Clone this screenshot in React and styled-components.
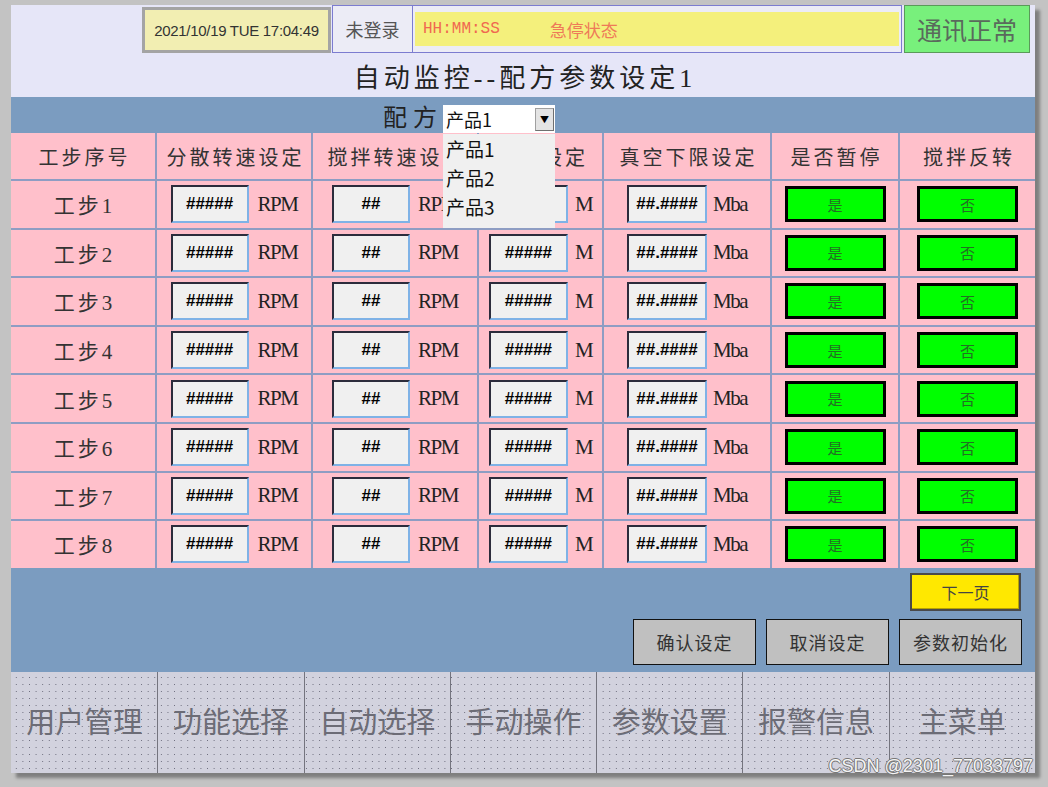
import React from 'react';
import styled, { createGlobalStyle } from 'styled-components';

const GlobalStyle = createGlobalStyle`
  html, body { margin: 0; padding: 0; }
  body {
    background: #c3c3c3;
    width: 1048px;
    height: 787px;
    overflow: hidden;
    font-family: "Liberation Serif", "Noto Sans CJK SC", serif;
  }
`;

const Screen = styled.div`
  position: relative;
  width: 1024px;
  margin: 5px 0 0 11px;
  display: flex;
  flex-direction: column;
  box-shadow: 5px 5px 3px rgba(0, 0, 0, 0.35);
`;

const Header = styled.header`
  height: 92px;
  background: #e6e6f8;
  display: flex;
  flex-direction: column;
`;

const StatusRow = styled.div`
  height: 48px;
  display: flex;
  align-items: flex-start;
  padding-left: 131px;
`;

const DateBox = styled.div`
  box-sizing: border-box;
  width: 189px;
  height: 46px;
  margin-top: 2px;
  background: #f2eeb2;
  border: 3px solid #a4a4a4;
  display: flex;
  align-items: center;
  justify-content: center;
  font: 15px "Liberation Sans", sans-serif;
  letter-spacing: -0.3px;
  color: #333;
`;

const LoginBox = styled.div`
  box-sizing: border-box;
  width: 81px;
  height: 48px;
  margin-left: 1px;
  background: #ececf6;
  border: 1px solid #7c7cd0;
  display: flex;
  align-items: center;
  justify-content: center;
  font: 18px "Noto Sans CJK SC", sans-serif;
  color: #555;
`;

const AlarmBox = styled.div`
  box-sizing: border-box;
  width: 489px;
  height: 48px;
  padding: 6px 2px;
  background: #ececf6;
  border: 1px solid #7c7cd0;
  border-left: none;
`;

const AlarmInner = styled.div`
  height: 100%;
  background: #f4f07c;
  display: flex;
  align-items: center;
  padding-left: 8px;
  gap: 50px;
`;

const AlarmTime = styled.span`
  font: 16px "Liberation Mono", monospace;
  color: #f06850;
`;

const AlarmText = styled.span`
  font: 17px "Noto Sans CJK SC", sans-serif;
  color: #ee7a58;
`;

const CommBox = styled.div`
  box-sizing: border-box;
  width: 126px;
  height: 48px;
  margin-left: 2px;
  background: #78f07c;
  border: 1px solid #5a9a5a;
  display: flex;
  align-items: center;
  justify-content: center;
  font: 25px "Noto Sans CJK SC", sans-serif;
  color: #5a6a5c;
`;

const Title = styled.h1`
  margin: 0;
  height: 44px;
  display: flex;
  align-items: center;
  justify-content: center;
  padding-left: 4px;
  font-family: "Liberation Serif", "Noto Sans CJK SC", serif;
  font-weight: 400;
  font-size: 26px;
  letter-spacing: 4px;
  color: #222;
`;

const RecipeBand = styled.div`
  height: 36px;
  background: #7b9cc0;
  display: flex;
  align-items: center;
  padding-left: 372px;
`;

const RecipeLabel = styled.span`
  font: 24px "Noto Sans CJK SC", sans-serif;
  letter-spacing: 6px;
  color: #222;
`;

const Select = styled.div`
  position: relative;
  align-self: flex-end;
  box-sizing: border-box;
  width: 112px;
  height: 28px;
  background: #fff;
  display: flex;
  align-items: center;
  padding-left: 3px;
  font: 18px "Noto Sans CJK SC", sans-serif;
  color: #111;
`;

const SelectArrow = styled.span`
  position: absolute;
  right: 1px;
  top: 3px;
  bottom: 2px;
  width: 19px;
  box-sizing: border-box;
  background: #e4e4e4;
  border: 1px solid #a0a0a0;
  border-right-color: #707070;
  border-bottom-color: #707070;
  display: flex;
  align-items: center;
  justify-content: center;
  font-size: 9px;
  color: #000;
`;

const OptionList = styled.ul`
  position: absolute;
  z-index: 5;
  left: 0;
  top: 29px;
  width: 112px;
  height: 94px;
  box-sizing: border-box;
  margin: 0;
  padding: 1px 0 0 3px;
  list-style: none;
  background: #f0f0f0;
`;

const Option = styled.li`
  height: 29px;
  line-height: 29px;
  font: 19px "Noto Sans CJK SC", sans-serif;
  color: #111;
`;

const Table = styled.div`
  display: grid;
  grid-template-columns: 144px 154px 164px 123px 166px 126px 135px;
  grid-template-rows: 46px repeat(8, 46.6px);
  gap: 2px;
  background: #8e9dc3;
`;

const HeadCell = styled.div`
  background: #ffc0cb;
  display: flex;
  align-items: center;
  justify-content: center;
  padding-left: 3px;
  font: 20px "Noto Sans CJK SC", sans-serif;
  letter-spacing: 3px;
  color: #333;
`;

const StepCell = styled(HeadCell)`
  font-family: "Liberation Serif", "Noto Sans CJK SC", serif;
  font-size: 21px;
`;

const FieldCell = styled.div`
  background: #ffc0cb;
  display: flex;
  align-items: center;
  justify-content: center;
  gap: ${(p) => p.$gap || 8}px;
`;

const ValueBox = styled.div`
  box-sizing: border-box;
  width: ${(p) => p.$w}px;
  height: 38px;
  background: #f0f0f0;
  border-style: solid;
  border-width: 2px;
  border-color: #2c2c3c #7fb2e6 #7fb2e6 #2c2c3c;
  display: flex;
  align-items: center;
  justify-content: center;
  font: bold 17px "Liberation Sans", sans-serif;
  color: #000;
`;

const Unit = styled.span`
  font: 21px "Liberation Serif", serif;
  letter-spacing: -1.5px;
  color: #222;
`;

const ToggleButton = styled.div`
  box-sizing: border-box;
  width: 101px;
  height: 36px;
  background: #00ff00;
  border: 3px solid #000;
  display: flex;
  align-items: center;
  justify-content: center;
  font: 15px "Noto Sans CJK SC", sans-serif;
  color: #237023;
`;

const ActionArea = styled.div`
  height: 104px;
  background: #7b9cc0;
  display: flex;
  flex-direction: column;
  align-items: flex-end;
  padding: 5px 13px 0 0;
  box-sizing: border-box;
  gap: 8px;
`;

const NextButton = styled.div`
  box-sizing: border-box;
  width: 111px;
  height: 38px;
  margin-right: 1px;
  background: #ffe800;
  border: 2px solid #4a4a4a;
  box-shadow: inset -1px -1px 0 #b8a400;
  display: flex;
  align-items: center;
  justify-content: center;
  font: 16px "Noto Sans CJK SC", sans-serif;
  color: #444;
`;

const ButtonRow = styled.div`
  display: flex;
  gap: 10px;
`;

const GrayButton = styled.div`
  box-sizing: border-box;
  width: 123px;
  height: 46px;
  background: #c0c0c0;
  border: 1.5px solid #111;
  display: flex;
  align-items: center;
  justify-content: center;
  font: 18px "Noto Sans CJK SC", sans-serif;
  letter-spacing: 1px;
  color: #333;
`;

const NavBar = styled.nav`
  height: 101px;
  display: grid;
  grid-template-columns: repeat(7, 1fr);
  background-color: #d2d2de;
  background-image: radial-gradient(#6c6c7c 0.7px, transparent 0.9px);
  background-size: 6.6px 7px;
  background-position: 2px 2px;
`;

const NavItem = styled.div`
  display: flex;
  align-items: center;
  justify-content: center;
  padding-bottom: 4px;
  border-left: ${(p) => (p.$first ? 'none' : '1px solid #74747e')};
  font: 29px "Noto Sans CJK SC", sans-serif;
  color: #6c6c76;
`;

const Watermark = styled.span`
  position: absolute;
  right: 2px;
  bottom: -4px;
  font: 18px "Liberation Sans", sans-serif;
  color: #f4f4f4;
  text-shadow: -1px 0 #777, 1px 0 #777, 0 -1px #777, 0 1px #777;
`;

const headers = ['工步序号', '分散转速设定', '搅拌转速设定', '时间设定', '真空下限设定', '是否暂停', '搅拌反转'];
const steps = [1, 2, 3, 4, 5, 6, 7, 8];
const navs = ['用户管理', '功能选择', '自动选择', '手动操作', '参数设置', '报警信息', '主菜单'];

const App = () => {
  return (
    <>
      <GlobalStyle />
      <Screen>
        <Header>
          <StatusRow>
            <DateBox>2021/10/19 TUE 17:04:49</DateBox>
            <LoginBox>未登录</LoginBox>
            <AlarmBox>
              <AlarmInner>
                <AlarmTime>HH:MM:SS</AlarmTime>
                <AlarmText>急停状态</AlarmText>
              </AlarmInner>
            </AlarmBox>
            <CommBox>通讯正常</CommBox>
          </StatusRow>
          <Title>自动监控--配方参数设定1</Title>
        </Header>

        <RecipeBand>
          <RecipeLabel>配方</RecipeLabel>
          <Select>
            产品1
            <SelectArrow>▼</SelectArrow>
            <OptionList>
              <Option>产品1</Option>
              <Option>产品2</Option>
              <Option>产品3</Option>
            </OptionList>
          </Select>
        </RecipeBand>

        <Table>
          {headers.map((h) => (
            <HeadCell key={h}>{h}</HeadCell>
          ))}
          {steps.map((n) => (
            <React.Fragment key={n}>
              <StepCell>工步{n}</StepCell>
              <FieldCell $gap={9}>
                <ValueBox $w={78}>#####</ValueBox>
                <Unit>RPM</Unit>
              </FieldCell>
              <FieldCell $gap={8}>
                <ValueBox $w={78}>##</ValueBox>
                <Unit>RPM</Unit>
              </FieldCell>
              <FieldCell $gap={7}>
                <ValueBox $w={79}>#####</ValueBox>
                <Unit>M</Unit>
              </FieldCell>
              <FieldCell $gap={6}>
                <ValueBox $w={80}>##.####</ValueBox>
                <Unit>Mba</Unit>
              </FieldCell>
              <FieldCell>
                <ToggleButton>是</ToggleButton>
              </FieldCell>
              <FieldCell>
                <ToggleButton>否</ToggleButton>
              </FieldCell>
            </React.Fragment>
          ))}
        </Table>

        <ActionArea>
          <NextButton>下一页</NextButton>
          <ButtonRow>
            <GrayButton>确认设定</GrayButton>
            <GrayButton>取消设定</GrayButton>
            <GrayButton>参数初始化</GrayButton>
          </ButtonRow>
        </ActionArea>

        <NavBar>
          {navs.map((n, i) => (
            <NavItem key={n} $first={i === 0}>{n}</NavItem>
          ))}
        </NavBar>
        <Watermark>CSDN @2301_77033797</Watermark>
      </Screen>
    </>
  );
};

export default App;
